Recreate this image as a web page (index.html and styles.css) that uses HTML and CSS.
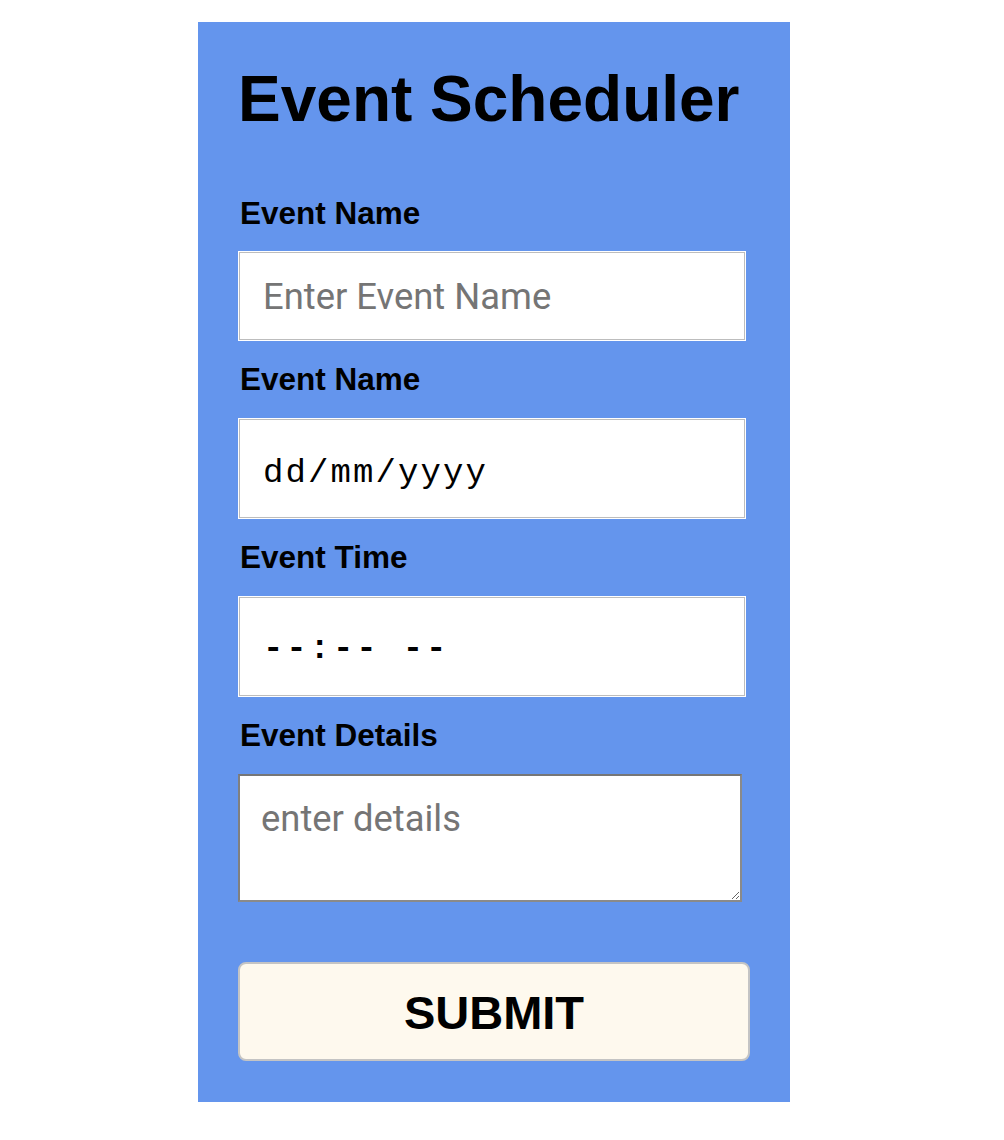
FILE: index.html
```html
<!DOCTYPE html>
<html lang="en">
<head>
<meta charset="utf-8">
<title>Event Scheduler</title>
<link rel="stylesheet" href="styles.css">
</head>
<body>
<div class="card">
  <h1 class="title">Event Scheduler</h1>
  <form class="form">
    <label class="label label-first" for="ev-name">Event Name</label>
    <input class="field field-text" id="ev-name" type="text" placeholder="Enter Event Name">
    <label class="label" for="ev-date">Event Name</label>
    <input class="field field-date" id="ev-date" type="text" placeholder="dd/mm/yyyy">
    <label class="label" for="ev-time">Event Time</label>
    <input class="field field-time" id="ev-time" type="text" placeholder="--:-- --">
    <label class="label" for="ev-details">Event Details</label>
    <textarea class="details" id="ev-details" placeholder="enter details"></textarea>
    <button class="submit" type="button">SUBMIT</button>
  </form>
</div>
</body>
</html>
```
FILE: styles.css
```css
html, body {
  margin: 0;
  padding: 0;
  background: #ffffff;
}

body {
  font-family: "Liberation Sans", Arial, Helvetica, sans-serif;
  color: #000000;
}

.card {
  box-sizing: border-box;
  width: 592px;
  margin: 22px 0 0 198px;
  padding: 40px 40px 41px;
  background: #6495ed;
}

.title {
  margin: 0;
  font-size: 64px;
  line-height: 74px;
  font-weight: bold;
}

.form {
  display: flex;
  flex-direction: column;
  align-items: flex-start;
  margin-top: 59px;
}

.label {
  display: block;
  font-size: 31.5px;
  line-height: 36px;
  font-weight: bold;
  margin: 20px 0 21px 2px;
}

.label-first {
  margin-top: 0;
  margin-bottom: 20px;
}

.field {
  box-sizing: border-box;
  width: 508px;
  margin: 0;
  padding: 0 24px;
  border: 1px solid #ffffff;
  box-shadow: inset 0 0 0 1px #bdbdbd;
  background: #ffffff;
  outline: none;
  color: #000000;
}

.field-text {
  height: 90px;
  padding-top: 1px;
  font-family: Roboto, "Liberation Sans", sans-serif;
  font-size: 36.4px;
}

.field-text::placeholder {
  color: #757575;
}

.field-date {
  height: 101px;
  padding-top: 9px;
  font-family: "Liberation Mono", "Courier New", monospace;
  font-size: 34px;
  letter-spacing: 2.1px;
}

.field-date::placeholder {
  color: #000000;
}

.field-time {
  height: 101px;
  padding-top: 4px;
  font-family: "Liberation Mono", "Courier New", monospace;
  font-size: 34px;
  font-weight: bold;
  letter-spacing: 2.9px;
}

.field-time::placeholder {
  color: #000000;
}

.details {
  box-sizing: border-box;
  width: 504px;
  height: 128px;
  margin: 0;
  padding: 21px 21px;
  border: 2px solid #8a8a8a;
  border-top-color: #767676;
  border-left-color: #808080;
  background: #ffffff;
  font-family: Roboto, "Liberation Sans", sans-serif;
  font-size: 36.4px;
  outline: none;
}

.details::placeholder {
  color: #757575;
}

.submit {
  box-sizing: border-box;
  width: 512px;
  height: 99px;
  margin: 60px 0 0;
  padding: 2px 0 0;
  border: 2px solid #c4c4c4;
  border-radius: 8px;
  background: #fef9ee;
  font-family: "Liberation Sans", Arial, Helvetica, sans-serif;
  font-size: 47px;
  font-weight: bold;
  color: #000000;
  cursor: pointer;
}
```
